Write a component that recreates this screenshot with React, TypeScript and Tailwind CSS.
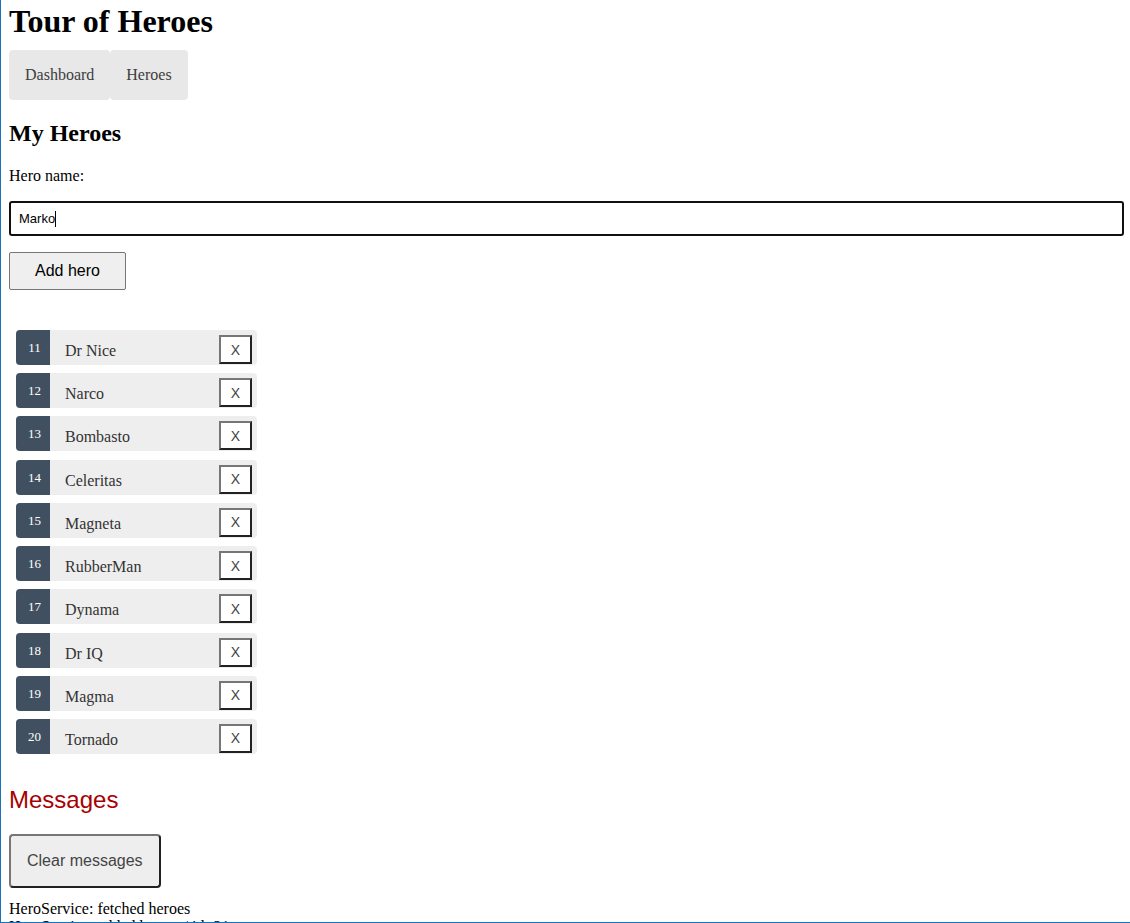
import { useState } from "react";

const initialHeroes = [
  { id: 11, name: "Dr Nice" },
  { id: 12, name: "Narco" },
  { id: 13, name: "Bombasto" },
  { id: 14, name: "Celeritas" },
  { id: 15, name: "Magneta" },
  { id: 16, name: "RubberMan" },
  { id: 17, name: "Dynama" },
  { id: 18, name: "Dr IQ" },
  { id: 19, name: "Magma" },
  { id: 20, name: "Tornado" },
];

const bevel =
  "border-2 border-t-[#767676] border-l-[#767676] border-r-[#212121] border-b-[#212121]";

function Nav() {
  const link = "rounded bg-[#e8e8e8] px-4 py-4 leading-[18px] text-[#3d3d3d]";
  return (
    <nav className="mt-2.5 flex">
      <a href="#dashboard" className={link}>
        Dashboard
      </a>
      <a href="#heroes" className={link}>
        Heroes
      </a>
    </nav>
  );
}

export default function App() {
  const [heroes, setHeroes] = useState(initialHeroes);
  const [name, setName] = useState("Marko");
  const [messages, setMessages] = useState([
    "HeroService: fetched heroes",
    "HeroService: added hero w/ id=21",
  ]);

  const addHero = () => {
    const trimmed = name.trim();
    if (!trimmed) return;
    const id = Math.max(10, ...heroes.map((hero) => hero.id)) + 1;
    setHeroes([...heroes, { id, name: trimmed }]);
    setMessages([...messages, `HeroService: added hero w/ id=${id}`]);
    setName("");
  };

  return (
    <div className="h-screen overflow-hidden border-b border-l border-[#1a73b8] bg-white pr-1.5 pl-2 font-['Liberation_Serif',serif] text-base leading-[18px] text-black">
      <h1 className="pt-0.5 text-[32px] leading-[38px] font-bold">Tour of Heroes</h1>
      <Nav />

      <h2 className="mt-[19px] text-2xl leading-7 font-bold">My Heroes</h2>
      <label htmlFor="new-hero" className="mt-5 block">
        Hero name:
      </label>
      <div className="relative mt-4 font-['Liberation_Sans',sans-serif] text-[13px]">
        <input
          id="new-hero"
          value={name}
          onChange={(event) => setName(event.target.value)}
          className="block h-[35px] w-full rounded-[3px] border-2 border-[#101010] bg-white px-2 caret-transparent outline-none"
        />
        <div aria-hidden="true" className="pointer-events-none absolute inset-y-0 left-2.5 flex items-center">
          <span className="invisible whitespace-pre">{name}</span>
          <span className="h-4 w-px bg-black" />
        </div>
      </div>
      <button
        type="button"
        onClick={addHero}
        className="mt-4 block rounded-xs border border-[#767676] bg-[#efefef] px-[25px] py-[9px] font-['Liberation_Sans',sans-serif] leading-[18px]"
      >
        Add hero
      </button>

      <ul className="mt-10 ml-[7px] grid min-h-[424px] w-[241px] content-between">
        {heroes.map((hero) => (
          <li key={hero.id} className="flex h-[35px] items-center rounded bg-[#eeeeee] pr-[5px]">
            <a href={`#hero-${hero.id}`} className="flex h-full flex-1 text-[#333333]">
              <span className="w-[34px] self-stretch rounded-l bg-[#405061] pt-[9px] pl-[3px] text-center text-[13px] leading-[18px] text-white">
                {hero.id}
              </span>
              <span className="pt-3 pl-[15px]">{hero.name}</span>
            </a>
            <button
              type="button"
              aria-label={`Delete ${hero.name}`}
              onClick={() => setHeroes(heroes.filter((other) => other.id !== hero.id))}
              className={`${bevel} mt-1 h-[29px] w-[33px] bg-white font-['Liberation_Sans',sans-serif] text-sm leading-4 text-[#444444]`}
            >
              X
            </button>
          </li>
        ))}
      </ul>

      <h2 className="mt-8 font-['Liberation_Sans',sans-serif] text-2xl leading-7 text-[#a80000]">
        Messages
      </h2>
      <button
        type="button"
        onClick={() => setMessages([])}
        className={`${bevel} mt-5 mb-3 block rounded bg-[#eeeeee] p-4 font-['Liberation_Sans',sans-serif] leading-[18px] text-[#444444]`}
      >
        Clear messages
      </button>
      {messages.map((message) => (
        <div key={message}>{message}</div>
      ))}
    </div>
  );
}
